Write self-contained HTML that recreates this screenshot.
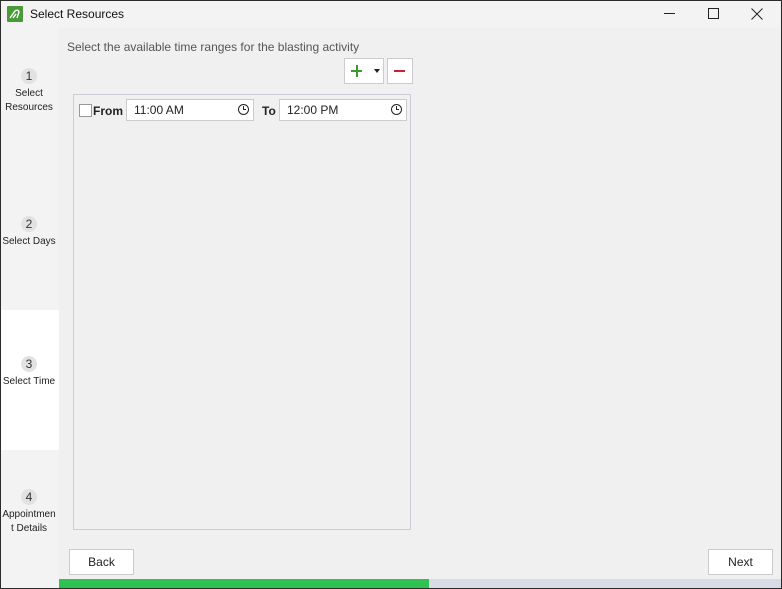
<!DOCTYPE html><html><head><style>
*{margin:0;padding:0;box-sizing:border-box}
body{width:782px;height:589px;overflow:hidden;font-family:"Liberation Sans",sans-serif;background:#f0f0f0;position:relative}
.win{position:absolute;left:0;top:0;width:782px;height:589px;border:1px solid #2b2b2b;}
.abs{position:absolute}
.title{left:0;top:0;width:780px;height:28px;background:#f3f3f3}
.side{left:0;top:28px;width:58px;height:560px;background:#f3f3f3}
.step{position:absolute;left:0;width:58px;text-align:center;font-size:10px;color:#222;line-height:14px}
.num{width:16px;height:16px;border-radius:50%;background:#e2e2e2;margin:0 auto 3px;font-size:12px;line-height:16px;color:#333}
.inp{background:#fff;border:1px solid #ccc;height:22px;font-size:12px;line-height:21px;padding-left:7px;color:#222}
.clk{position:absolute;right:4px;top:4px;width:11px;height:11px;border:1px solid #222;border-radius:50%}
.clk:before{content:"";position:absolute;left:4px;top:1px;width:1px;height:4px;background:#222}
.clk:after{content:"";position:absolute;left:4px;top:4px;width:3px;height:1px;background:#222}
.btn{background:#fff;border:1px solid #ccc;font-size:12px;text-align:center;color:#222}
</style></head><body>
<div class="abs title"></div>
<div class="abs" style="left:7px;top:6px;width:16px;height:16px;background:#4a9a3a;border-radius:1px"><svg width="16" height="16"><path d="M3 12 L8 5 Q11 3 12 6 L10 12 M6 12 L9 8" stroke="#fff" stroke-width="1.4" fill="none"/></svg></div>
<div class="abs" style="left:30px;top:7px;font-size:12px;color:#111">Select Resources</div>
<div class="abs" style="left:664px;top:13px;width:11px;height:1px;background:#222"></div>
<div class="abs" style="left:708px;top:8px;width:11px;height:11px;border:1px solid #222"></div>
<svg class="abs" style="left:751px;top:8px" width="12" height="12"><path d="M0.5 0.5L11.5 11.5M11.5 0.5L0.5 11.5" stroke="#222"/></svg>
<div class="abs side"></div>
<div class="abs" style="left:0;top:310px;width:59px;height:140px;background:#fff"></div>
<div class="step" style="top:68px"><div class="num">1</div>Select<br>Resources</div>
<div class="step" style="top:216px"><div class="num">2</div>Select Days</div>
<div class="step" style="top:356px"><div class="num">3</div>Select Time</div>
<div class="step" style="top:489px"><div class="num">4</div>Appointmen<br>t Details</div>
<div class="abs" style="left:67px;top:40px;font-size:12px;color:#555">Select the available time ranges for the blasting activity</div>
<div class="abs btn" style="left:344px;top:58px;width:40px;height:26px"></div>
<div class="abs" style="left:351px;top:70px;width:11px;height:2px;background:#3c9a2c"></div>
<div class="abs" style="left:356px;top:65px;width:2px;height:12px;background:#3c9a2c"></div>
<div class="abs" style="left:374px;top:69px;border-left:3px solid transparent;border-right:3px solid transparent;border-top:4px solid #222"></div>
<div class="abs btn" style="left:387px;top:58px;width:26px;height:26px"></div>
<div class="abs" style="left:394px;top:70px;width:11px;height:2px;background:#d0202a"></div>
<div class="abs" style="left:73px;top:94px;width:338px;height:436px;border:1px solid #ccccd6"></div>
<div class="abs" style="left:79px;top:104px;width:13px;height:13px;background:#fff;border:1px solid #999"></div>
<div class="abs" style="left:93px;top:104px;font-size:12px;font-weight:bold;color:#222">From</div>
<div class="abs inp" style="left:126px;top:99px;width:128px">11:00 AM<div class="clk"></div></div>
<div class="abs" style="left:262px;top:104px;font-size:12px;font-weight:bold;color:#222">To</div>
<div class="abs inp" style="left:279px;top:99px;width:128px">12:00 PM<div class="clk"></div></div>
<div class="abs btn" style="left:69px;top:549px;width:65px;height:26px;line-height:25px">Back</div>
<div class="abs btn" style="left:708px;top:549px;width:65px;height:26px;line-height:25px">Next</div>
<div class="abs" style="left:59px;top:579px;width:370px;height:9px;background:#2fc152"></div>
<div class="abs" style="left:429px;top:579px;width:352px;height:9px;background:#d8dde5"></div>
<div class="win"></div>
</body></html>
